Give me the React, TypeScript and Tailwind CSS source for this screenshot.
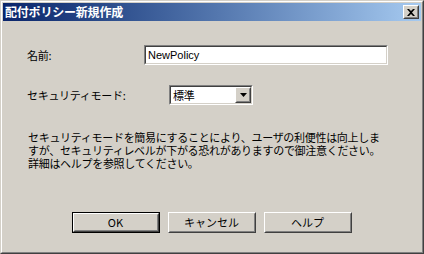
import React from 'react'

const jp = "font-['Noto_Sans_CJK_JP',sans-serif]"

function Raised({ children, className = '' }: { children?: React.ReactNode; className?: string }) {
  return (
    <div className={`border border-t-white border-l-white border-r-[#404040] border-b-[#404040] bg-[#d4d0c8] ${className}`}>
      <div className="w-full h-full border border-t-[#d4d0c8] border-l-[#d4d0c8] border-r-[#808080] border-b-[#808080] flex items-center justify-center">
        {children}
      </div>
    </div>
  )
}

function Sunken({ children, className = '' }: { children?: React.ReactNode; className?: string }) {
  return (
    <div className={`border border-t-[#808080] border-l-[#808080] border-r-white border-b-white ${className}`}>
      <div className="w-full h-full border border-t-[#404040] border-l-[#404040] border-r-[#d4d0c8] border-b-[#d4d0c8] bg-white flex items-center">
        {children}
      </div>
    </div>
  )
}

const lines = [
  'セキュリティモードを簡易にすることにより、ユーザの利便性は向上しま',
  'すが、セキュリティレベルが下がる恐れがありますので御注意ください。',
  '詳細はヘルプを参照してください。',
]

export default function App() {
  return (
    <div className="w-[424px] h-[254px] border border-t-[#d4d0c8] border-l-[#d4d0c8] border-r-[#404040] border-b-[#404040] bg-[#d4d0c8]">
      <div className="w-full h-full border border-t-white border-l-white border-r-[#808080] border-b-[#808080] p-px flex flex-col">
        {/* title bar */}
        <div className="h-[18px] bg-gradient-to-r from-[#0a246a] to-[#a6caf0] flex items-center justify-between pl-[2px] pr-[2px]">
          <span className={`${jp} text-white font-bold text-[12px] leading-none tracking-[-0.2px]`}>配付ポリシー新規作成</span>
          <Raised className="w-[16px] h-[14px]">
            <svg width="8" height="7" viewBox="0 0 8 7">
              <path d="M0 0h2l2 2 2-2h2L5 3.5 8 7H6L4 5 2 7H0l3-3.5z" fill="#000" />
            </svg>
          </Raised>
        </div>

        {/* content */}
        <div className={`${jp} text-[11px] text-black pl-[24px] pt-[24px] tracking-[-0.3px]`}>
          <div className="flex items-center h-[20px]">
            <span className="w-[117px]">名前:</span>
            <Sunken className="w-[244px] h-[20px]">
              <span className="pl-[2px] font-['Liberation_Sans',sans-serif] tracking-normal">NewPolicy</span>
            </Sunken>
          </div>

          <div className="flex items-center h-[20px] mt-[20px]">
            <span className="w-[142px]">セキュリティモード:</span>
            <Sunken className="w-[84px] h-[20px]">
              <span className="pl-[2px] flex-1">標準</span>
              <Raised className="w-[16px] h-[16px]">
                <svg width="7" height="4" viewBox="0 0 7 4">
                  <path d="M0 0h7L3.5 4z" fill="#000" />
                </svg>
              </Raised>
            </Sunken>
          </div>

          <div className="mt-[26px] pl-px">
            {lines.map((l) => (
              <div key={l} className="h-[13px] leading-[13px] whitespace-nowrap">
                {l}
              </div>
            ))}
          </div>
        </div>

        {/* buttons */}
        <div className={`${jp} text-[11px] text-black flex justify-center gap-[8px] mt-[42px] pr-[1px]`}>
          <div className="border border-black">
            <Raised className="w-[86px] h-[19px]">OK</Raised>
          </div>
          <Raised className="w-[88px] h-[21px]">キャンセル</Raised>
          <Raised className="w-[88px] h-[21px]">ヘルプ</Raised>
        </div>
      </div>
    </div>
  )
}
